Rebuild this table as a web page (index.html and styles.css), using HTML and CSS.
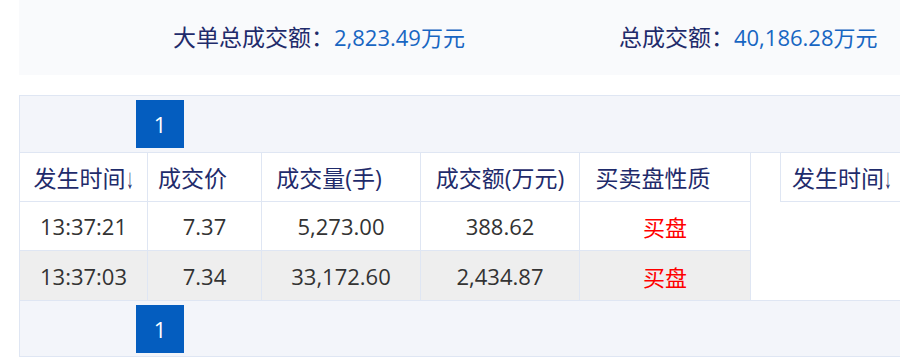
FILE: index.html
```html
<!DOCTYPE html>
<html lang="zh-CN">
<head>
<meta charset="utf-8">
<title>大单成交</title>
<link rel="stylesheet" href="styles.css">
</head>
<body>
<div class="page">
  <div class="summary">
    <div class="stat"><span class="label">大单总成交额：</span><span class="val">2,823.49万元</span></div>
    <div class="stat"><span class="label">总成交额：</span><span class="val">40,186.28万元</span></div>
  </div>
  <div class="panel">
    <div class="pager"><span class="pg">1</span></div>
    <div class="tables">
      <table class="grid main">
        <colgroup>
          <col class="c1"><col class="c2"><col class="c3"><col class="c4"><col class="c5">
        </colgroup>
        <thead>
          <tr>
            <th>发生时间<span class="arrow">↓</span></th>
            <th class="shift">成交价</th>
            <th class="shift">成交量(手)</th>
            <th>成交额(万元)</th>
            <th class="shift">买卖盘性质</th>
          </tr>
        </thead>
        <tbody>
          <tr>
            <td>13:37:21</td><td>7.37</td><td>5,273.00</td><td>388.62</td><td class="buy">买盘</td>
          </tr>
          <tr class="alt">
            <td>13:37:03</td><td>7.34</td><td>33,172.60</td><td>2,434.87</td><td class="buy">买盘</td>
          </tr>
        </tbody>
      </table>
      <table class="grid side">
        <thead>
          <tr><th>发生时间<span class="arrow">↓</span></th></tr>
        </thead>
      </table>
    </div>
    <div class="pager bottom"><span class="pg">1</span></div>
  </div>
</div>
</body>
</html>
```
FILE: styles.css
```css
html, body {
  margin: 0;
  padding: 0;
  overflow: hidden;
  background: #ffffff;
}
body {
  font-family: "Open Sans", "Noto Sans CJK SC", sans-serif;
  font-size: 22px;
  color: #333333;
}
.page {
  width: 1200px;
  padding-left: 19px;
}
.summary {
  height: 75px;
  background: #f9fafc;
  display: flex;
  align-items: center;
  padding-left: 154px;
  padding-bottom: 4px;
  gap: 154px;
  box-sizing: border-box;
}
.stat {
  white-space: nowrap;
}
.label {
  color: #1f2b6b;
  font-size: 23px;
}
.val {
  color: #1866c2;
}
.panel {
  margin-top: 20px;
  border: 1px solid #dfe6f3;
  background: #ffffff;
}
.pager {
  height: 56px;
  background: #f3f5fa;
  padding: 4px 0 4px 116px;
  box-sizing: border-box;
}
.pager.bottom {
  border-top: 1px solid #dfe6f3;
}
.pg {
  display: flex;
  width: 48px;
  height: 48px;
  align-items: center;
  justify-content: center;
  background: #045dbf;
  color: #ffffff;
  font-size: 22px;
}
.tables {
  display: flex;
  align-items: flex-start;
  border-top: 1px solid #dfe6f3;
}
.grid {
  border-collapse: separate;
  border-spacing: 0;
  table-layout: fixed;
}
.main {
  width: 731px;
}
.c1 { width: 128px; }
.c2 { width: 114px; }
.c3 { width: 159px; }
.c4 { width: 159px; }
.c5 { width: 171px; }
.grid th,
.grid td {
  height: 48px;
  padding: 0;
  border-right: 1px solid #dfe6f3;
  border-bottom: 1px solid #dfe6f3;
  text-align: center;
  white-space: nowrap;
  font-weight: normal;
}
.grid th {
  color: #1f2b6b;
  background: #ffffff;
  font-size: 23px;
}
.arrow {
  font-family: "Liberation Sans", sans-serif;
  font-size: 28px;
  line-height: 1;
  display: inline-block;
  transform: scaleX(0.5);
  margin-left: -3px;
  margin-right: -3px;
  vertical-align: -1px;
}
.grid th.shift {
  padding-right: 24px;
}
.main tbody tr:last-child td {
  border-bottom: none;
  height: 49px;
}
.grid td {
  color: #333333;
}
.alt td {
  background: #eeeeee;
}
.grid td.buy {
  color: #ff0000;
}
.side {
  margin-left: 29px;
  border-left: 1px solid #dfe6f3;
}
.side th {
  text-align: left;
  padding-left: 11px;
  width: 200px;
}
```
